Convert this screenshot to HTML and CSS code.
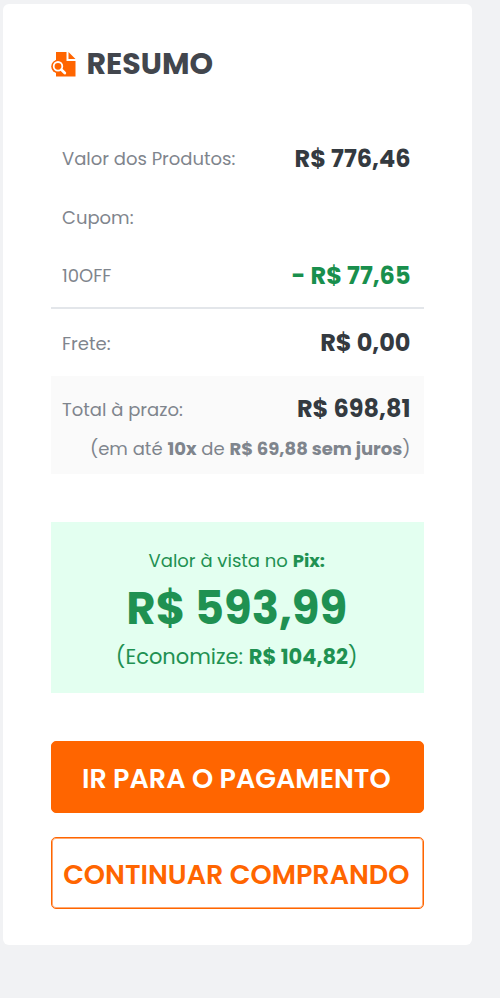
FILE: index.html
```html
<!DOCTYPE html>
<html lang="pt-BR">
<head>
<meta charset="utf-8">
<title>Resumo</title>
<link rel="stylesheet" href="styles.css">
</head>
<body>
<main class="card">
  <h1 class="title">
    <svg class="title-icon" viewBox="0 0 25 26" aria-hidden="true">
      <path fill="#ff6500" d="M5 1H15.500V10H24.500V25.500H5V21A6.500 6.500 0 0 1 5 9.500ZM17.500 1L24.500 8H17.500Z"/>
      <circle cx="7" cy="15.500" r="6.800" fill="#ff6500"/>
      <circle cx="7" cy="15.300" r="4.300" fill="none" stroke="#fff" stroke-width="1.800"/>
      <path d="M10.500 18.800L13.800 22" stroke="#fff" stroke-width="2.800" stroke-linecap="round"/>
    </svg>
    <span>RESUMO</span>
  </h1>
  <section class="summary">
    <div class="row"><span class="label">Valor dos Produtos:</span><b class="value">R$ 776,46</b></div>
    <div class="row"><span class="label">Cupom:</span></div>
    <div class="row"><span class="label">10OFF</span><b class="value discount">- R$ 77,65</b></div>
    <div class="row shipping"><span class="label">Frete:</span><b class="value">R$ 0,00</b></div>
    <div class="total">
      <div class="total-row"><span class="label">Total à prazo:</span><b class="value">R$ 698,81</b></div>
      <p class="installments">(em até <b>10x</b> de <b>R$ 69,88 sem juros</b>)</p>
    </div>
  </section>
  <section class="pix">
    <p class="pix-label">Valor à vista no <b>Pix:</b></p>
    <p class="pix-price">R$ 593,99</p>
    <p class="pix-save">(Economize: <b>R$ 104,82</b>)</p>
  </section>
  <div class="actions">
    <button class="button primary">IR PARA O PAGAMENTO</button>
    <button class="button outline">CONTINUAR COMPRANDO</button>
  </div>
</main>
</body>
</html>
```
FILE: styles.css
```css
* { box-sizing: border-box; }
body { margin: 0; padding: 4px 28.5px 0 3px; background: #f1f2f4; font-family: Poppins, Inter, sans-serif; color: #7f858d; font-size: 18px; }
h1, p { margin: 0; }
.card { height: 941px; padding: 48px; background: #fff; border-radius: 6px; }
.title { display: flex; align-items: center; gap: 10.500px; height: 23px; font-size: 30px; line-height: 23px; font-weight: 700; color: #42464d; }
.title-icon { width: 25px; height: 26px; flex: none; }
.summary { padding-top: 54px; }
.row, .total-row { display: flex; align-items: center; justify-content: space-between; padding: 0 13px 0 11px; }
.row { height: 58.500px; }
.label { padding-top: 1px; }
.value { font-size: 24px; font-weight: 700; color: #343a40; }
.discount { color: #198f4d; }
.row.shipping { height: 69px; margin-top: 2px; padding-top: 1px; border-top: 2px solid #e3e6ea; }
.total { height: 98px; padding-top: 14.500px; background: #fafafa; }
.total-row { height: 37px; }
.installments { padding-right: 13px; text-align: right; line-height: 44px; }
.pix { height: 171px; margin-top: 48px; padding: 25px 1px 0 0; background: #e3fff0; color: #1f9152; text-align: center; }
.pix-label { line-height: 28px; }
.pix-price { font-size: 45px; line-height: 68px; font-weight: 700; }
.pix-save { font-size: 21px; line-height: 27px; }
.actions { display: grid; gap: 24px; margin-top: 48px; }
.button { height: 72px; padding: 4px 2px 0 0; border: 1px solid #ff6500; border-radius: 5px; font: 600 27px Poppins, Inter, sans-serif; text-align: center; }
.primary { background: #ff6500; color: #fff; }
.outline { background: #fff; color: #ff6500; box-shadow: inset 0 0 0 1px rgba(255, 101, 0, .55); }
```
